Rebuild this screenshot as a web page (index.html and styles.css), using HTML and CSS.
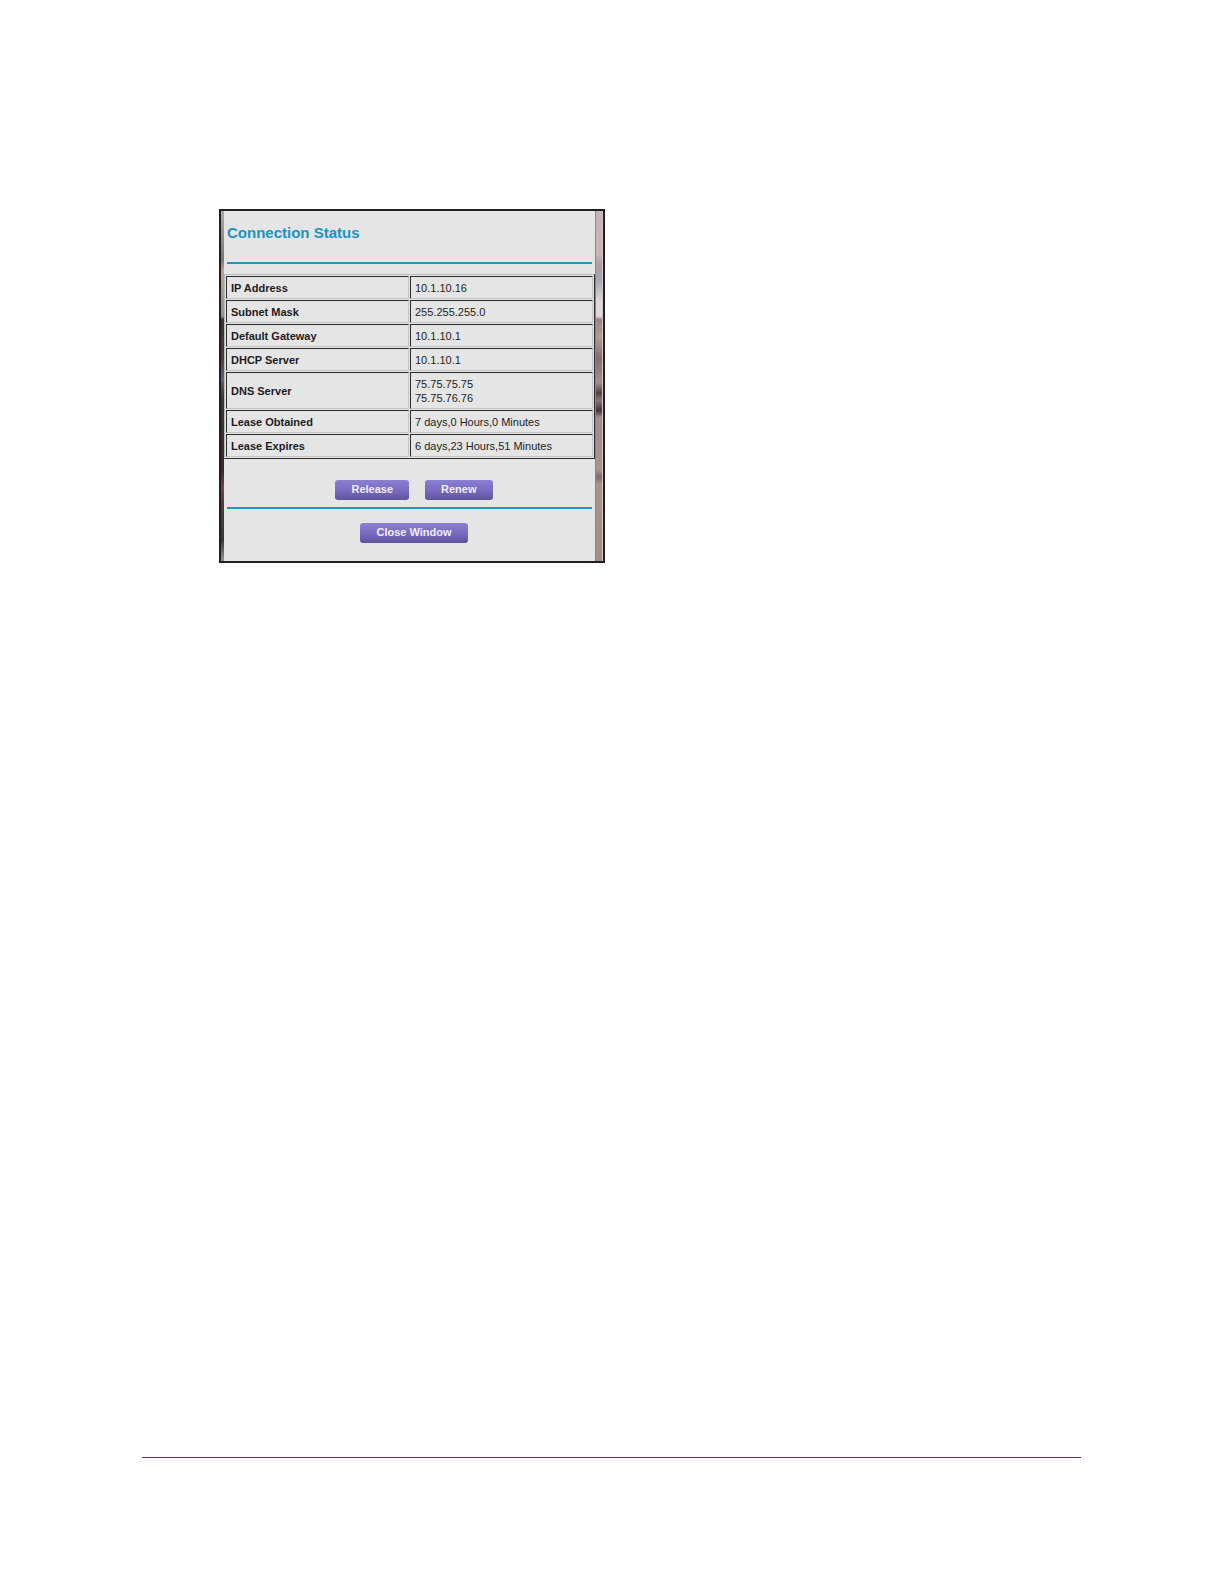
FILE: index.html
```html
<!DOCTYPE html>
<html lang="en">
<head>
<meta charset="utf-8">
<title>Connection Status</title>
<link rel="stylesheet" href="styles.css">
</head>
<body class="page">
<main class="content">
  <section class="window">
    <div class="edge edge-left"></div>
    <div class="panel">
      <h1 class="title">Connection Status</h1>
      <hr class="rule">
      <table class="status">
        <tbody>
          <tr><th scope="row">IP Address</th><td>10.1.10.16</td></tr>
          <tr><th scope="row">Subnet Mask</th><td>255.255.255.0</td></tr>
          <tr><th scope="row">Default Gateway</th><td>10.1.10.1</td></tr>
          <tr><th scope="row">DHCP Server</th><td>10.1.10.1</td></tr>
          <tr><th scope="row">DNS Server</th><td>75.75.75.75<br>75.75.76.76</td></tr>
          <tr><th scope="row">Lease Obtained</th><td>7 days,0 Hours,0 Minutes</td></tr>
          <tr><th scope="row">Lease Expires</th><td>6 days,23 Hours,51 Minutes</td></tr>
        </tbody>
      </table>
      <div class="actions">
        <button class="button" type="button">Release</button>
        <button class="button" type="button">Renew</button>
      </div>
      <hr class="rule">
      <div class="actions actions-close">
        <button class="button" type="button">Close Window</button>
      </div>
    </div>
    <div class="edge edge-right"></div>
  </section>
</main>
<footer class="footer"><hr class="footer-line"></footer>
</body>
</html>
```
FILE: styles.css
```css
* {
  box-sizing: border-box;
}

.page {
  display: flex;
  flex-direction: column;
  min-height: 100vh;
  margin: 0;
  padding: 209px 143px 126px 142px;
  background: #fff;
  color: #1c1c22;
  font: 11px/14px "Liberation Sans", Arial, sans-serif;
}

.content {
  flex: 1;
  padding-left: 77px;
}

.window {
  display: grid;
  grid-template-columns: 3px 1fr 8px;
  max-width: 386px;
  border: 2px solid #231f20;
  background: #e5e5e5;
}

.edge-left {
  background: linear-gradient(#aaa 0%, #77777b 14%, #b8a398 17%, #929292 30%, #3c3034 31%, #4a3d43 42%, #68607a 48%, #3b3638 53%, #37282d 74%, #79404c 79%, #4b3c41 84%, #38343b 94%, #96969a 100%);
}

.edge-right {
  border-left: 1px solid #8a8688;
  border-right: 1px solid #d4c4c4;
  background: linear-gradient(#c5b3b7 0%, #cbb5b9 12%, #a99da6 16%, #a8a8b2 20%, #e0d9dc 26%, #e0d9dc 30%, #9c8480 31%, #b39c96 36%, #856f6b 42%, #a28f8b 49%, #4d4245 52%, #83777a 54%, #40373b 57%, #a28f89 59%, #a8938d 74%, #7d6c69 76%, #a8938d 78%, #a28f89 100%);
}

.title {
  margin: 0;
  padding: 13px 3px 20px;
  color: #1a94c4;
  font-size: 15px;
  line-height: 18px;
}

.rule {
  height: 2px;
  margin: 0 3px;
  border: 0;
  background: #1c95c3;
}

.status {
  width: 100%;
  margin-top: 10px;
  border: 1px solid;
  border-color: #b8bab6 #2b2b2d #2b2b2d #b8bab6;
  border-spacing: 1px;
  table-layout: fixed;
}

.status th,
.status td {
  padding: 4px 4px 3px;
  border: 1px solid;
  border-color: #2b2b2d #c4c4c4 #c4c4c4 #2b2b2d;
  text-align: left;
  vertical-align: middle;
}

.actions {
  display: flex;
  justify-content: center;
  gap: 16px;
  padding: 21px 0 7px 9px;
}

.actions-close {
  padding: 14px 0 18px 9px;
}

.button {
  height: 20px;
  padding: 0 16px 2px;
  border: 0;
  border-radius: 3px;
  background: linear-gradient(#8b80d4, #7a6cc0 50%, #5f529c);
  color: #efedff;
  font: bold 11px/18px "Liberation Sans", Arial, sans-serif;
}

.footer-line {
  height: 1px;
  margin: 0;
  border: 0;
  background: #5a3573;
}
```
